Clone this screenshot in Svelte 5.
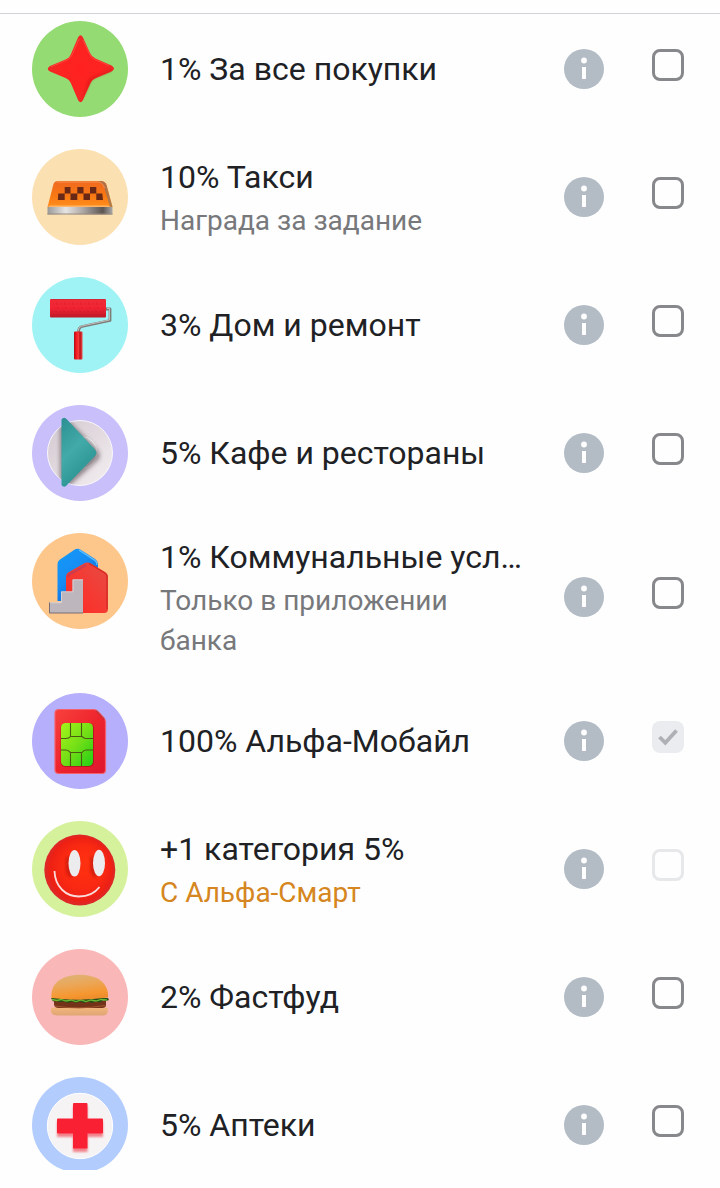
<script lang="ts">
  type Category = {
    icon: string;
    color: string;
    title: string;
    note?: string;
    accent?: boolean;
    checked?: boolean;
    disabled?: boolean;
  };

  const categories: Category[] = [
    { icon: 'star', color: '#93db72', title: '1% За все покупки' },
    { icon: 'taxi', color: '#fbe0b1', title: '10% Такси', note: 'Награда за задание' },
    { icon: 'roller', color: '#9ff3f5', title: '3% Дом и ремонт' },
    { icon: 'cafe', color: '#c8bffb', title: '5% Кафе и рестораны' },
    { icon: 'house', color: '#fdc68b', title: '1% Коммунальные усл…', note: 'Только в приложении банка' },
    { icon: 'sim', color: '#b5affc', title: '100% Альфа-Мобайл', checked: true, disabled: true },
    { icon: 'smile', color: '#d6f19c', title: '+1 категория 5%', note: 'С Альфа-Смарт', accent: true, disabled: true },
    { icon: 'burger', color: '#fab7b8', title: '2% Фастфуд' },
    { icon: 'pharmacy', color: '#b2ccfe', title: '5% Аптеки' },
  ];

  let selected = $state(categories.map((c) => !!c.checked));

  function toggle(i: number) {
    if (!categories[i].disabled) selected[i] = !selected[i];
  }
</script>

<main>
  <ul>
    {#each categories as c, i}
      <li>
        <svg class="icon" viewBox="0 0 96 96" aria-hidden="true">
          <circle cx="48" cy="48" r="48" fill={c.color} />
          {#if c.icon === 'star'}
            <defs>
              <radialGradient id="star" cx=".5" cy=".5" r=".5">
                <stop offset="0" stop-color="#ff211f" />
                <stop offset=".6" stop-color="#fd2321" />
                <stop offset="1" stop-color="#ee2a26" />
              </radialGradient>
              <filter id="starSoft"><feGaussianBlur stdDeviation=".8" /></filter>
            </defs>
            <path d="M46 16.500Q48.500 12 51 16.500L58 32Q59.500 35.500 63.500 37.500L79.500 44.500Q84.500 47.800 79.500 50.500L64 57Q60 58.500 58.500 62L51 79Q48.500 83.500 46 79L39 62.500Q37.500 58.500 33.500 57L18 50.500Q13.500 48 18 45L33.500 38.500Q37.500 37 39 33Z" fill="url(#star)" />
            <path d="M60 56L79 48.500Q81 49 79 50.500L64 56.500Q60 58 58.500 61.500L50.500 78.500L54 66Q56 58 60 56Z" fill="#c91214" opacity=".5" filter="url(#starSoft)" />
            <path d="M19 45.700L34 39.500Q38.500 38 40 34L47 18M51 19L57.500 33Q59 37 63 38.500L77 44.500" fill="none" stroke="#ff6a5e" stroke-width="1" opacity=".5" />
          {:else if c.icon === 'taxi'}
            <defs>
              <linearGradient id="taxi" x1="0" y1="0" x2="0" y2="1">
                <stop offset="0" stop-color="#ef6a20" />
                <stop offset=".55" stop-color="#f87713" />
                <stop offset="1" stop-color="#ff8f1d" />
              </linearGradient>
              <linearGradient id="chrome">
                <stop offset="0" stop-color="#999" />
                <stop offset=".28" stop-color="#e7e5e3" />
                <stop offset=".55" stop-color="#aaa6a4" />
                <stop offset=".85" stop-color="#5c5552" />
                <stop offset="1" stop-color="#aaa" />
              </linearGradient>
            </defs>
            <path d="M21.500 35Q22.500 32 26 32H69Q73 32 74.500 36L80.500 58H15.500Z" fill="url(#taxi)" />
            <path d="M68 32Q73 32 74.500 36L80.500 58H78L72 38Q71 35 66 33Z" fill="#8e7360" opacity=".65" />
            <path d="M25 33H66Q71 33.500 72.500 39" fill="none" stroke="#f99150" stroke-width="1" />
            <path d="M18 56.500H76L78.500 58H16Z" fill="#ffb565" />
            <path d="M15.500 58H80.500V65.500H15.500Z" fill="url(#chrome)" />
            <path d="M15.500 65H80.500" stroke="#9a8a7d" />
            <path d="M32.700 38H38.500V44.500H32.700zM45.300 38H51.500V44.500H45.300zM58 38H64.300V44.500H58zM26.300 44.500H32.700V51H25.800zM38.500 44.500H45.300V51H38.500zM51.500 44.500H58V51H51.500zM64.300 44.500H70.300L71 51H64.300z" fill="#682815" />
          {:else if c.icon === 'roller'}
            <defs>
              <linearGradient id="roller" x1="0" y1="0" x2="0" y2="1">
                <stop offset="0" stop-color="#ef2b36" />
                <stop offset=".5" stop-color="#f22333" />
                <stop offset="1" stop-color="#bd1927" />
              </linearGradient>
              <linearGradient id="handle">
                <stop offset="0" stop-color="#ae0b14" />
                <stop offset=".3" stop-color="#f61c22" />
                <stop offset=".55" stop-color="#f13b3c" />
                <stop offset=".7" stop-color="#b90e16" />
                <stop offset="1" stop-color="#ea4c4b" />
              </linearGradient>
            </defs>
            <path d="M74 32H78V43.500L50 49.500Q46.500 50.500 46.500 55" fill="none" stroke="#7e7c79" stroke-width="2.800" stroke-linejoin="round" />
            <path d="M75 31.500H77.500V43L50 49Q46 50 46 54" fill="none" stroke="#c2c0bc" stroke-width="1" />
            <rect x="18" y="22" width="56" height="18.500" rx="1" fill="url(#roller)" />
            <path d="M19 22.500H73" stroke="#d42635" />
            <path d="M21 27h50M22 31h50M20 34.500h52M21 37.500h49" stroke="#c91a2a" stroke-width="1" stroke-dasharray="1 2 2 3" opacity=".6" />
            <rect x="42" y="54.500" width="8.500" height="28" rx="1" fill="url(#handle)" />
          {:else if c.icon === 'cafe'}
            <defs>
              <linearGradient id="plate" x1="0" y1="0" x2="1" y2="1">
                <stop offset="0" stop-color="#d2cad0" />
                <stop offset=".5" stop-color="#e2dadf" />
                <stop offset="1" stop-color="#f5f0f2" />
              </linearGradient>
              <linearGradient id="napkin" x1="0" y1="0" x2=".5" y2="1">
                <stop offset="0" stop-color="#2b8f91" />
                <stop offset=".5" stop-color="#42aaa8" />
                <stop offset="1" stop-color="#28918f" />
              </linearGradient>
              <filter id="plateShadow" x="-30%" y="-30%" width="160%" height="160%">
                <feGaussianBlur stdDeviation="2.200" />
              </filter>
              <clipPath id="plateClip"><circle cx="48" cy="48" r="32.500" /></clipPath>
            </defs>
            <circle cx="48" cy="48" r="32.500" fill="url(#plate)" stroke="#f9f7fd" />
            <circle cx="49" cy="47.500" r="16" fill="#e3dde1" stroke="#fff" stroke-width="1" />
            <g clip-path="url(#plateClip)">
              <path d="M28 20L35 14L65 44Q69 50 67 54L36 82H28Z" fill="#584c53" opacity=".6" filter="url(#plateShadow)" />
            </g>
            <path d="M29.500 14.500Q32 11 35 14.500L63 44.500Q66 48 63 51L34 81Q31.500 83 29.500 80Z" fill="url(#napkin)" />
          {:else if c.icon === 'house'}
            <defs>
              <linearGradient id="blueHouse" x1="0" y1="0" x2=".7" y2="1">
                <stop offset="0" stop-color="#159bf9" />
                <stop offset=".5" stop-color="#168cf2" />
                <stop offset="1" stop-color="#075ed0" />
              </linearGradient>
              <linearGradient id="redHouse" x1="1" y1="0" x2="0" y2="1">
                <stop offset="0" stop-color="#e54c44" />
                <stop offset=".5" stop-color="#f43a33" />
                <stop offset="1" stop-color="#ff2922" />
              </linearGradient>
            </defs>
            <path d="M25.500 31Q25.500 28 28 26.500L42 17Q45.500 14.500 49 17L63 26Q66 28 66 31V68H25.500Z" fill="url(#blueHouse)" />
            <path d="M47 17L63 27.500Q65 29 65 32" fill="none" stroke="#62c3ff" stroke-width="1.200" />
            <path d="M34 44Q34 40.500 37 39L52 30.500Q55.500 28.500 59 30.500L73 39Q76 40.500 76 44V76Q76 80 72 80H34Z" fill="url(#redHouse)" />
            <path d="M57 30.500L73 40Q75 41.500 75 45V76" fill="none" stroke="#d52a25" stroke-width="1.300" />
            <path d="M36 44Q36 42 39 40.500L54 32" fill="none" stroke="#a83e68" stroke-width="2" opacity=".55" />
            <path d="M17 69.500H29V58.500H40.500V46.500H51V80H17Z" fill="#bdb6bd" />
            <path d="M17.500 69.500V80H51" fill="none" stroke="#786c73" stroke-width="1" />
            <path d="M18 69.800H29.500V58.800H41V46.800H51" fill="none" stroke="#ded7da" stroke-width=".8" />
          {:else if c.icon === 'sim'}
            <defs>
              <linearGradient id="sim" x1="0" y1="0" x2="1" y2="1">
                <stop offset="0" stop-color="#f8413d" />
                <stop offset=".5" stop-color="#ee242d" />
                <stop offset="1" stop-color="#de1730" />
              </linearGradient>
              <linearGradient id="chip" x1="0" y1="0" x2="1" y2="1">
                <stop offset="0" stop-color="#a5f41a" />
                <stop offset=".5" stop-color="#75df17" />
                <stop offset="1" stop-color="#20cf16" />
              </linearGradient>
            </defs>
            <path d="M23 20Q23 16.500 27 16.500H62Q64 16.500 66 18.500L72 25Q73.500 27 73.500 29V77Q73.500 80.500 70 80.500H27Q23 80.500 23 77Z" fill="url(#sim)" stroke="#f4606d" stroke-width="1.200" />
            <path d="M64 17.500L72.500 26.500" stroke="#9b302f" stroke-width="1.500" opacity=".5" />
            <rect x="28.500" y="30" width="33.500" height="44" rx="5" fill="#8e0d18" opacity=".55" />
            <rect x="29" y="30" width="32" height="43" rx="4.500" fill="url(#chip)" />
            <path d="M38.500 30V43M49.500 30V43M38.500 60V73M49.500 60V73M29 45.500H34Q37 45.500 38.500 43.500H50Q52 45.500 54 45.500H61M29 57H34Q36 57 38.500 59.500H50Q52 57 54 57H61" fill="none" stroke="#4b5b12" stroke-width="1.100" />
          {:else if c.icon === 'smile'}
            <defs>
              <radialGradient id="ball" cx=".5" cy=".5" r=".5" fx=".62" fy=".38">
                <stop offset="0" stop-color="#ff3210" />
                <stop offset=".6" stop-color="#fa2912" />
                <stop offset=".88" stop-color="#ec2014" />
                <stop offset="1" stop-color="#d92a2d" />
              </radialGradient>
              <filter id="eyeShadow" x="-50%" y="-50%" width="200%" height="200%">
                <feGaussianBlur stdDeviation="1.500" />
              </filter>
            </defs>
            <circle cx="47.800" cy="49" r="35.500" fill="url(#ball)" />
            <path d="M36 36V48Q36 53 40 55M60.500 36V48Q60.500 53 64 55" fill="none" stroke="#a80d0d" stroke-width="3.500" opacity=".6" filter="url(#eyeShadow)" />
            <ellipse cx="42.500" cy="42.300" rx="6" ry="13.200" fill="#ececee" />
            <ellipse cx="67" cy="42" rx="6" ry="13.200" fill="#ececee" />
            <path d="M22.500 50C23 66 34 75.500 47 75.500C56 75.500 63 72 67.500 66" fill="none" stroke="#fbdcdb" stroke-width="1.800" />
          {:else if c.icon === 'burger'}
            <defs>
              <linearGradient id="bun" x1=".3" y1="0" x2=".6" y2="1">
                <stop offset="0" stop-color="#dfb377" />
                <stop offset=".4" stop-color="#eba656" />
                <stop offset=".8" stop-color="#f6962f" />
                <stop offset="1" stop-color="#ec8c2c" />
              </linearGradient>
              <linearGradient id="bottomBun" x1="0" y1="0" x2="0" y2="1">
                <stop offset="0" stop-color="#f3b67d" />
                <stop offset="1" stop-color="#dfa573" />
              </linearGradient>
            </defs>
            <path d="M20 58.500H75Q77 61 75 64.500Q74 66.500 70 66.500H26Q21 66.500 19.500 64Q18 60.500 20 58.500Z" fill="url(#bottomBun)" />
            <path d="M22 52H74V56Q74 59 70 59H27Q22 59 22 55Z" fill="#743319" />
            <path d="M23 57Q46 61 73 56.500" fill="none" stroke="#a0542d" stroke-width="1" />
            <path d="M19 49H76L77 51L74 52L71 51.500L68 53.500L64 52.500L60 54L56 52.500L52 54L48 52.500L44 54L40 52.500L36 54L32 52.500L27 53L24 51.500L21 52.500Z" fill="#274d19" />
            <path d="M20 50.500L25 51.500L29 50.500L34 52L39 51L44 52.500L49 51L54 52.500L59 51L64 52L69 50.500L75 51" fill="none" stroke="#69b832" stroke-width="1.300" />
            <path d="M19.500 49C18 35 29 25.800 48 25.800C66 25.800 77 35 76 48.500Q48 52.500 19.500 49Z" fill="url(#bun)" />
          {:else}
            <defs>
              <filter id="crossShadow" x="-20%" y="-20%" width="140%" height="140%">
                <feGaussianBlur stdDeviation="1.200" />
              </filter>
            </defs>
            <circle cx="48" cy="49" r="32.700" fill="#f5f3f4" stroke="#fff" stroke-width="1" />
            <path d="M41 29H55.500V44.500H71V60H55.500V75H41V60H25V44.500H41Z" fill="#f2838c" filter="url(#crossShadow)" />
            <path d="M42 26H54.500Q55.500 26 55.500 27V41.500H70Q71 41.500 71 42.500V55.500Q71 56.500 70 56.500H55.500V71.500H41V56.500H26Q25 56.500 25 55.500V42.500Q25 41.500 26 41.500H41V27Q41 26 42 26Z" fill="#fa2034" />
          {/if}
        </svg>

        <div class="text">
          <div class="title">{c.title}</div>
          {#if c.note}
            <div class="note" class:accent={c.accent}>{c.note}</div>
          {/if}
        </div>

        <button class="info" aria-label="Подробнее">
          <svg viewBox="0 0 40 40">
            <circle cx="20" cy="20" r="20" fill="#b3bbc4" />
            <circle cx="20" cy="11.500" r="2.900" fill="#fff" />
            <path d="M18 18h4v12h-4z" fill="#fff" />
          </svg>
        </button>

        <button
          class="check"
          class:checked={selected[i]}
          role="checkbox"
          aria-checked={selected[i]}
          aria-label={c.title}
          disabled={c.disabled}
          onclick={() => toggle(i)}
        >
          {#if selected[i]}
            <svg viewBox="0 0 32 32">
              <path d="M7.500 16L13.300 21.800L24.500 9.500" fill="none" stroke="#aeb0b6" stroke-width="3.800" />
            </svg>
          {/if}
        </button>
      </li>
    {/each}
  </ul>
</main>

<style>
  :global(body) { margin: 0; background: #fefefe; }
  main {
    box-sizing: border-box;
    height: 1170px;
    padding-top: 13px;
    overflow: hidden;
    font-family: Roboto, sans-serif;
  }
  ul {
    display: flex;
    flex-direction: column;
    gap: 32px;
    margin: 0;
    padding: 7px 36px 0 32px;
    border-top: 1px solid #cfd3d6;
    list-style: none;
  }
  li {
    display: flex;
    align-items: center;
    min-height: 96px;
  }
  .icon {
    flex: none;
    align-self: flex-start;
    width: 96px;
    height: 96px;
    margin-right: 32px;
  }
  .text { flex: 1; min-width: 0; }
  .title {
    color: #202124;
    font-size: 32px;
    line-height: 48px;
    white-space: nowrap;
  }
  .note {
    max-width: 364px;
    color: #77787b;
    font-size: 28px;
    line-height: 40px;
  }
  .accent { color: #d58620; }
  button {
    flex: none;
    padding: 0;
    border: 0;
    background: none;
  }
  button svg { display: block; width: 100%; height: 100%; }
  .info {
    width: 40px;
    height: 40px;
    margin: 0 48px 0 32px;
  }
  .check {
    box-sizing: border-box;
    width: 32px;
    height: 32px;
    margin-bottom: 8px;
    border: 3px solid #87888b;
    border-radius: 8px;
  }
  .check:disabled { border-color: #e7e8ea; }
  .check.checked { border: 0; background: #ebecef; }
</style>
